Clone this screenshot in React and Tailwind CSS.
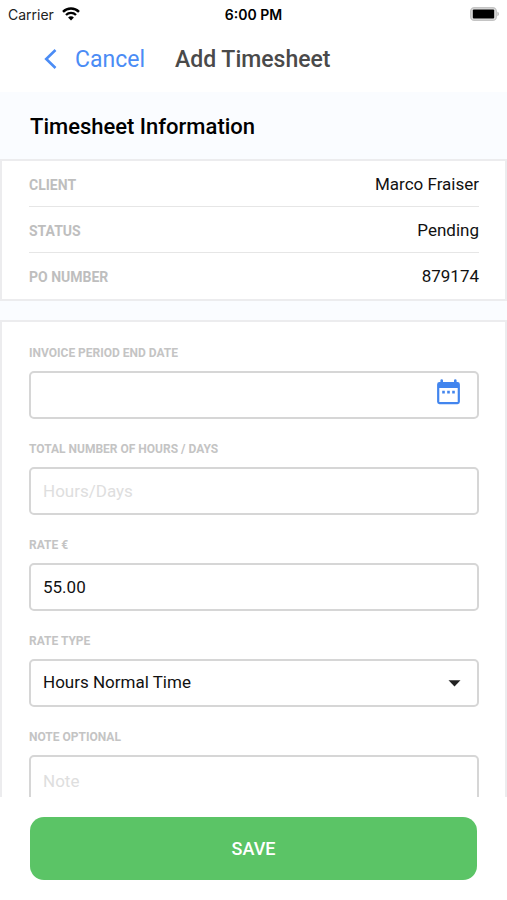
import { useId } from "react";

const details = [
  ["Client", "Marco Fraiser"],
  ["Status", "Pending"],
  ["PO Number", "879174"],
];

const control =
  "block h-12 w-full rounded-[5px] border-2 border-[#d6d6d6] bg-white px-3 text-[17px] text-[#111] outline-none placeholder:text-[#dedede]";

function StatusBar() {
  return (
    <div className="grid h-7 shrink-0 grid-cols-3 items-center px-2 font-['Inter','Liberation_Sans',sans-serif] text-[14px] text-[#222]">
      <div className="flex items-center gap-2">
        Carrier
        <svg width="18" height="14" viewBox="0 0 18 14" fill="none" stroke="#000" aria-hidden="true">
          <path d="M1 4.9C5.4.4 12.6.4 17 4.9" strokeWidth="2.4" />
          <path d="M4 8c2.8-2.8 7.2-2.8 10 0" strokeWidth="2.3" />
          <path d="M6.1 10.4c1.6-1.7 4.2-1.7 5.8 0L9 13.4z" fill="#000" stroke="none" />
        </svg>
      </div>
      <div className="text-center font-semibold text-black">6:00 PM</div>
      <svg className="justify-self-end" width="30" height="14" viewBox="0 0 30 14" aria-hidden="true">
        <rect x="1.7" y="0.7" width="25.6" height="12.6" rx="3.6" fill="#e0e0e0" stroke="#c4c4c4" strokeWidth="1.4" />
        <rect x="3.8" y="2.6" width="21.4" height="8.8" rx="1" fill="#000" />
        <path d="M28.4 4.8c2 .6 2 3.8 0 4.4z" fill="#b8b8b8" />
      </svg>
    </div>
  );
}

function Field({ label, children }) {
  const id = useId();
  return (
    <div>
      <label htmlFor={id} className="mb-[10px] block text-[12px] leading-4 font-bold text-[#c4c4c4] uppercase">
        {label}
      </label>
      <div className="relative">{children(id)}</div>
    </div>
  );
}

export default function App() {
  return (
    <div className="flex h-screen flex-col overflow-hidden bg-white font-['Roboto','Liberation_Sans',sans-serif] text-black">
      <StatusBar />
      <header className="flex h-16 shrink-0 items-center gap-[30px] pl-11 text-[23px]">
        <button type="button" className="flex items-center gap-[18px] text-[#4b8cf5]">
          <svg width="13" height="22" viewBox="0 0 13 22" fill="none" stroke="currentColor" strokeWidth="2.6" aria-hidden="true">
            <path d="M11.5 1 2.2 10l9.3 9" />
          </svg>
          Cancel
        </button>
        <h1 className="font-medium text-[#4a4a4a]">Add Timesheet</h1>
      </header>

      <main className="min-h-0 flex-1 overflow-hidden bg-[#fafcff]">
        <h2 className="px-[30px] pt-[19px] pb-4 text-[22px] leading-8 font-medium">Timesheet Information</h2>
        <dl className="border-2 border-[#ececee] bg-white pr-[26px] pl-[27px]">
          {details.map(([term, value]) => (
            <div
              key={term}
              className="flex h-[46px] items-center justify-between border-b border-[#e6e6e6] last:border-b-0"
            >
              <dt className="pt-[2px] text-[14px] leading-5 font-bold text-[#bebebe] uppercase">{term}</dt>
              <dd className="text-[17px] leading-5 text-[#111]">{value}</dd>
            </div>
          ))}
        </dl>

        <form className="mt-[19px] flex flex-col gap-[22px] border-2 border-[#ececee] bg-white pt-[23px] pr-[26px] pb-6 pl-[27px]">
          <Field label="Invoice period end date">
            {(id) => (
              <>
                <input id={id} type="text" className={control} />
                <svg className="absolute top-2 right-[18px]" width="24" height="26" viewBox="0 0 24 26" fill="#4285ee" aria-hidden="true">
                  <path
                    fillRule="evenodd"
                    d="M3.4 1.6a1.3 1.3 0 0 1 2.6 0v1.5h11V1.6a1.3 1.3 0 0 1 2.6 0v1.5h.9A2.4 2.4 0 0 1 22.9 5.5v17.3a2.4 2.4 0 0 1-2.4 2.4H2.5A2.4 2.4 0 0 1 .1 22.8V5.5a2.4 2.4 0 0 1 2.4-2.4h.9zM2.3 8.9v14h18.400v-14z"
                  />
                  <path d="M5.2 11.8h2.6v2.6H5.2zM10.2 11.8h2.6v2.6h-2.6zM15.2 11.8h2.6v2.6h-2.6z" />
                </svg>
              </>
            )}
          </Field>
          <Field label="Total number of hours / days">
            {(id) => <input id={id} type="text" placeholder="Hours/Days" className={control} />}
          </Field>
          <Field label="Rate €">
            {(id) => <input id={id} type="text" defaultValue="55.00" className={control} />}
          </Field>
          <Field label="Rate type">
            {(id) => (
              <>
                <select id={id} className={`${control} appearance-none`}>
                  <option>Hours Normal Time</option>
                </select>
                <svg className="pointer-events-none absolute top-[21px] right-[18px]" width="13" height="7" viewBox="0 0 13 7" aria-hidden="true">
                  <path d="M.5.3h12l-6 6.300z" fill="#222" />
                </svg>
              </>
            )}
          </Field>
          <Field label="Note optional">
            {(id) => <textarea id={id} placeholder="Note" className={`${control} h-24 resize-none pt-3 leading-6`} />}
          </Field>
        </form>
      </main>

      <footer className="shrink-0 bg-white px-[30px] pt-5 pb-5">
        <button type="button" className="h-[63px] w-full rounded-[14px] bg-[#5bc466] text-[18px] font-medium text-white">
          SAVE
        </button>
      </footer>
    </div>
  );
}
